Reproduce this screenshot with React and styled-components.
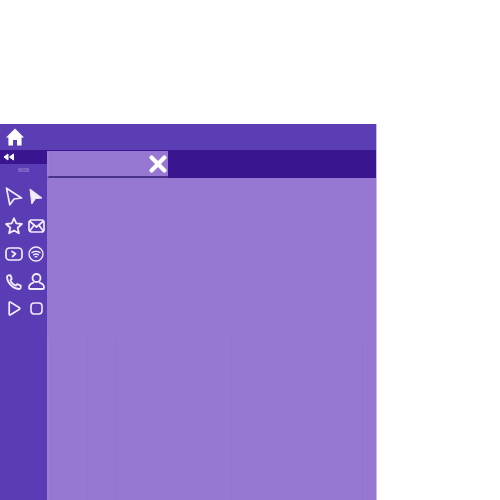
import React from 'react'
import styled, { createGlobalStyle } from 'styled-components'

const Global = createGlobalStyle`
  html, body { margin: 0; padding: 0; background: #fff; }
  body { font-family: "Liberation Sans", Arial, sans-serif; }
`

const Page = styled.div`
  width: 377px;
  height: 376px;
  margin-top: 124px;
  display: flex;
  flex-direction: column;
  border-right: 1px solid #c9b9ec;
  box-sizing: border-box;
`

const TopBar = styled.header`
  height: 26px;
  flex: none;
  background: #5b3eb4;
  display: flex;
  align-items: center;
  padding-left: 6px;
  color: #fff;
`

const Body = styled.div`
  flex: 1;
  display: flex;
  min-height: 0;
`

const Sidebar = styled.aside`
  width: 47px;
  flex: none;
  background: #5a3db4;
  display: flex;
  flex-direction: column;
`

const Collapse = styled.div`
  height: 14px;
  flex: none;
  background: #3a1590;
  display: flex;
  align-items: center;
  padding-left: 3px;
  color: #fff;
`

const Label = styled.div`
  height: 10px;
  margin-top: 1px;
  text-align: center;
  font-size: 5px;
  line-height: 10px;
  color: #a898dc;
`

const IconGrid = styled.div`
  display: grid;
  grid-template-columns: 22px 22px;
  grid-template-rows: 30px 29px 28px 27px 26px;
  margin-top: 6px;
  padding-left: 3px;
  align-items: center;
  justify-items: center;
  color: #f1ecfb;
`

const Main = styled.main`
  flex: 1;
  display: flex;
  flex-direction: column;
  background: #9678d3;
  min-width: 0;
`

const TabRow = styled.div`
  height: 28px;
  flex: none;
  box-sizing: border-box;
  padding-top: 1px;
  background: #3a1590;
  display: flex;
`

const Tab = styled.div`
  width: 118px;
  height: 25px;
  background: #9678d3;
  border-left: 2px solid #9d7ed7;
  border-bottom: 2px solid #4a3286;
  box-sizing: content-box;
  display: flex;
  align-items: center;
  justify-content: flex-end;
  padding-right: 1px;
  color: #fff;
`

const Columns = styled.div`
  margin-top: auto;
  height: 162px;
  display: flex;
  border-left: 2px solid #9d7ed7;
`

const Column = styled.div`
  flex: none;
  width: ${p => p.$w}px;
  border-right: 1px solid #9274d0;
  box-sizing: border-box;
`

const Glyph = styled.svg`
  display: block;
`

const line = { fill: 'none', stroke: 'currentColor', strokeLinecap: 'round', strokeLinejoin: 'round' }

function HomeIcon() {
  return (
    <Glyph width="18" height="18" viewBox="0 0 18 18" fill="currentColor">
      <path d="M9 0.5 L18 9.4 L15.6 9.4 L15.6 17.6 L11 17.6 L11 12 L7 12 L7 17.6 L2.4 17.6 L2.4 9.4 L0 9.4 Z" />
    </Glyph>
  )
}

function Rewind() {
  return (
    <Glyph width="11" height="8" viewBox="0 0 11 8" fill="currentColor" stroke="currentColor" strokeWidth="1" strokeLinejoin="round">
      <path d="M5 1 L1 4 L5 7 Z" />
      <path d="M10.5 1 L6.5 4 L10.5 7 Z" />
    </Glyph>
  )
}

function ArrowIcon() {
  return (
    <Glyph width="18" height="19" viewBox="0 0 18 19" {...line} strokeWidth="1.7">
      <path d="M1.5 1.2 L16.5 11 L9 12 L4.8 17.8 Z" />
    </Glyph>
  )
}

function FilledArrow() {
  return (
    <Glyph width="14" height="17" viewBox="0 0 14 17" fill="currentColor" stroke="currentColor" strokeWidth="1" strokeLinejoin="round">
      <path d="M1 1 L13 10 L6.5 10.6 L2.8 16 Z" />
    </Glyph>
  )
}

function StarIcon() {
  return (
    <Glyph width="18" height="18" viewBox="0 0 18 18" {...line} strokeWidth="1.8">
      <path d="M9 1.3 L11.3 6.4 L16.9 7 L12.7 10.7 L13.9 16.3 L9 13.4 L4.1 16.3 L5.3 10.7 L1.1 7 L6.7 6.4 Z" />
    </Glyph>
  )
}

function MailIcon() {
  return (
    <Glyph width="17" height="14" viewBox="0 0 17 14" {...line} strokeWidth="1.7">
      <rect x="1" y="1" width="15" height="12" rx="2.5" />
      <path d="M2 2.5 L8.5 8 L15 2.5" />
      <path d="M1.8 12 L5.8 6.6 M15.2 12 L11.2 6.6" />
    </Glyph>
  )
}

function VideoIcon() {
  return (
    <Glyph width="18" height="14" viewBox="0 0 18 14" {...line} strokeWidth="1.7">
      <rect x="1" y="1" width="16" height="12" rx="3.5" />
      <path d="M7 4.5 L10.5 6.8 L7.5 9.5" />
    </Glyph>
  )
}

function WifiIcon() {
  return (
    <Glyph width="16" height="16" viewBox="0 0 16 16" {...line} strokeWidth="1.4">
      <circle cx="8" cy="8" r="7" />
      <path d="M4 6.6 C6.2 4.9 9.8 4.9 12 6.6" />
      <path d="M5.6 8.8 C7 7.8 9 7.8 10.4 8.8" />
      <path d="M7.2 10.8 C7.7 10.4 8.3 10.4 8.8 10.8" />
    </Glyph>
  )
}

function PhoneIcon() {
  return (
    <Glyph width="16" height="16" viewBox="0 0 16 16" {...line} strokeWidth="1.8">
      <path d="M2 1.5 L4.4 1.2 L5.8 4.8 L4.4 6.2 C5.2 8.4 7.4 10.8 9.8 11.6 L11.2 10.2 L14.8 11.6 L14.6 14 C14.4 14.8 13.6 15 12.8 15 C6.8 14.6 1.4 9 1 3.2 C1 2.4 1.2 1.7 2 1.5 Z" />
    </Glyph>
  )
}

function UserIcon() {
  return (
    <Glyph width="17" height="17" viewBox="0 0 17 17" {...line} strokeWidth="1.8">
      <circle cx="8.5" cy="5" r="4" />
      <path d="M5.4 9.6 C3 10.4 1 12.4 1 14.4 C1 15.4 1.6 16 2.6 16 L14.4 16 C15.4 16 16 15.4 16 14.4 C16 12.4 14 10.4 11.6 9.6" />
    </Glyph>
  )
}

function PlayIcon() {
  return (
    <Glyph width="13" height="15" viewBox="0 0 13 15" {...line} strokeWidth="1.7">
      <path d="M1.2 1.8 C1.2 1.1 2 0.8 2.6 1.2 L11.4 6.7 C12 7.1 12 7.9 11.4 8.3 L2.6 13.8 C2 14.2 1.2 13.9 1.2 13.2 Z" />
    </Glyph>
  )
}

function StopIcon() {
  return (
    <Glyph width="13" height="13" viewBox="0 0 13 13" {...line} strokeWidth="1.6">
      <rect x="1" y="1" width="11" height="11" rx="3.2" />
    </Glyph>
  )
}

function CloseIcon() {
  return (
    <Glyph width="18" height="18" viewBox="0 0 18 18" {...line} strokeWidth="4.2">
      <path d="M2.6 2.6 L15.4 15.4 M15.4 2.6 L2.6 15.4" />
    </Glyph>
  )
}

export default function App() {
  return (
    <>
      <Global />
      <Page>
        <TopBar>
          <HomeIcon />
        </TopBar>
        <Body>
          <Sidebar>
            <Collapse><Rewind /></Collapse>
            <Label>8008</Label>
            <IconGrid>
              <ArrowIcon />
              <FilledArrow />
              <StarIcon />
              <MailIcon />
              <VideoIcon />
              <WifiIcon />
              <PhoneIcon />
              <UserIcon />
              <PlayIcon />
              <StopIcon />
            </IconGrid>
          </Sidebar>
          <Main>
            <TabRow>
              <Tab>
                <CloseIcon />
              </Tab>
            </TabRow>
            <Columns>
              <Column $w={39} />
              <Column $w={29} />
              <Column $w={115} />
              <Column $w={131} />
            </Columns>
          </Main>
        </Body>
      </Page>
    </>
  )
}
